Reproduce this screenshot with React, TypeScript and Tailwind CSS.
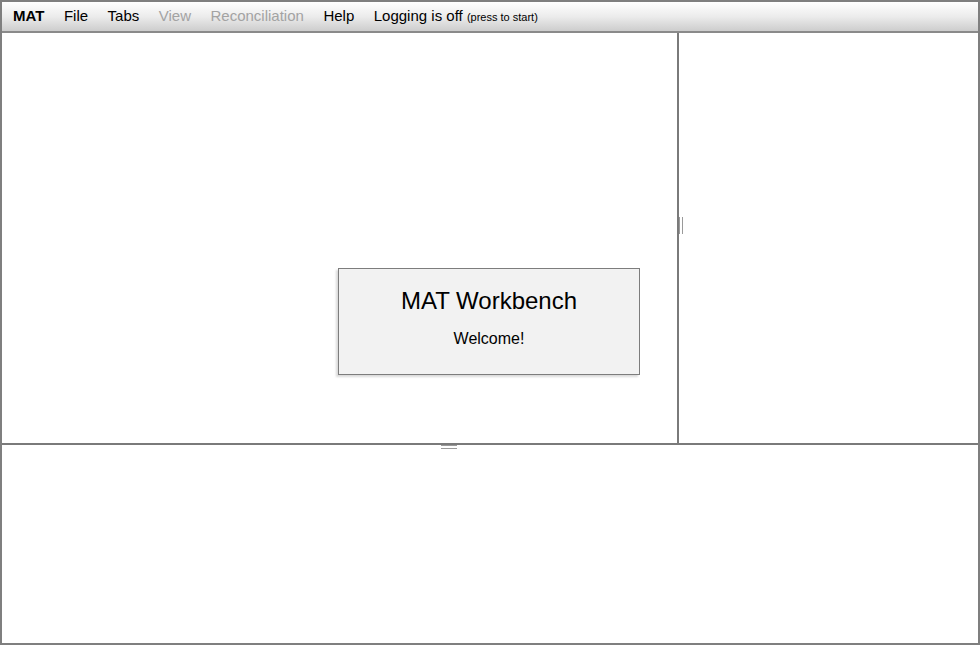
import React from "react";

const font = { fontFamily: '"Liberation Sans", Arial, Helvetica, sans-serif' };

export default function App() {
  return (
    <div
      className="relative w-[980px] h-[645px] border-2 border-[#7f7f7f] bg-white flex flex-col overflow-hidden"
      style={font}
    >
      {/* Menu bar */}
      <div className="h-[31px] shrink-0 border-b-2 border-[#8a8a8a] bg-gradient-to-b from-[#ffffff] via-[#ececec] to-[#cdcdcd] flex items-center pl-[11px] gap-[19.5px] text-[15px] text-black">
        <span className="font-bold">MAT</span>
        <span>File</span>
        <span>Tabs</span>
        <span className="text-[#a3a3a3]">View</span>
        <span className="text-[#a3a3a3]">Reconciliation</span>
        <span>Help</span>
        <span>
          Logging is off <span className="text-[11px]">(press to start)</span>
        </span>
      </div>

      {/* Upper area */}
      <div className="flex h-[410px] shrink-0">
        <div className="w-[675px] shrink-0 bg-white" />
        <div className="relative w-[2px] shrink-0 bg-[#7a7a7a]">
          <div className="absolute left-[2px] top-[184px] w-[4px] h-[17px] bg-white flex justify-between">
            <div className="w-[1px] h-full bg-[#9a9a9a]" />
            <div className="w-[1px] h-full bg-[#9a9a9a]" />
          </div>
        </div>
        <div className="flex-1 bg-white" />
      </div>

      {/* Horizontal splitter */}
      <div className="relative h-[2px] shrink-0 bg-[#7a7a7a]">
        <div className="absolute left-[439px] top-[2px] w-[16px] h-[4px] bg-white flex flex-col justify-between">
          <div className="h-[1px] w-full bg-[#9a9a9a]" />
          <div className="h-[1px] w-full bg-[#9a9a9a]" />
        </div>
      </div>

      {/* Lower area */}
      <div className="flex-1 bg-white" />

      {/* Welcome dialog */}
      <div className="absolute left-[336px] top-[266px] w-[302px] h-[107px] bg-[#f2f2f2] border border-[#7d7d7d] shadow-[-2px_2px_2px_rgba(0,0,0,0.15)] flex flex-col items-center">
        <div className="mt-[18px] text-[24px] leading-[28px] text-black">MAT Workbench</div>
        <div className="mt-[14px] text-[16px] leading-[20px] text-black">Welcome!</div>
      </div>
    </div>
  );
}
